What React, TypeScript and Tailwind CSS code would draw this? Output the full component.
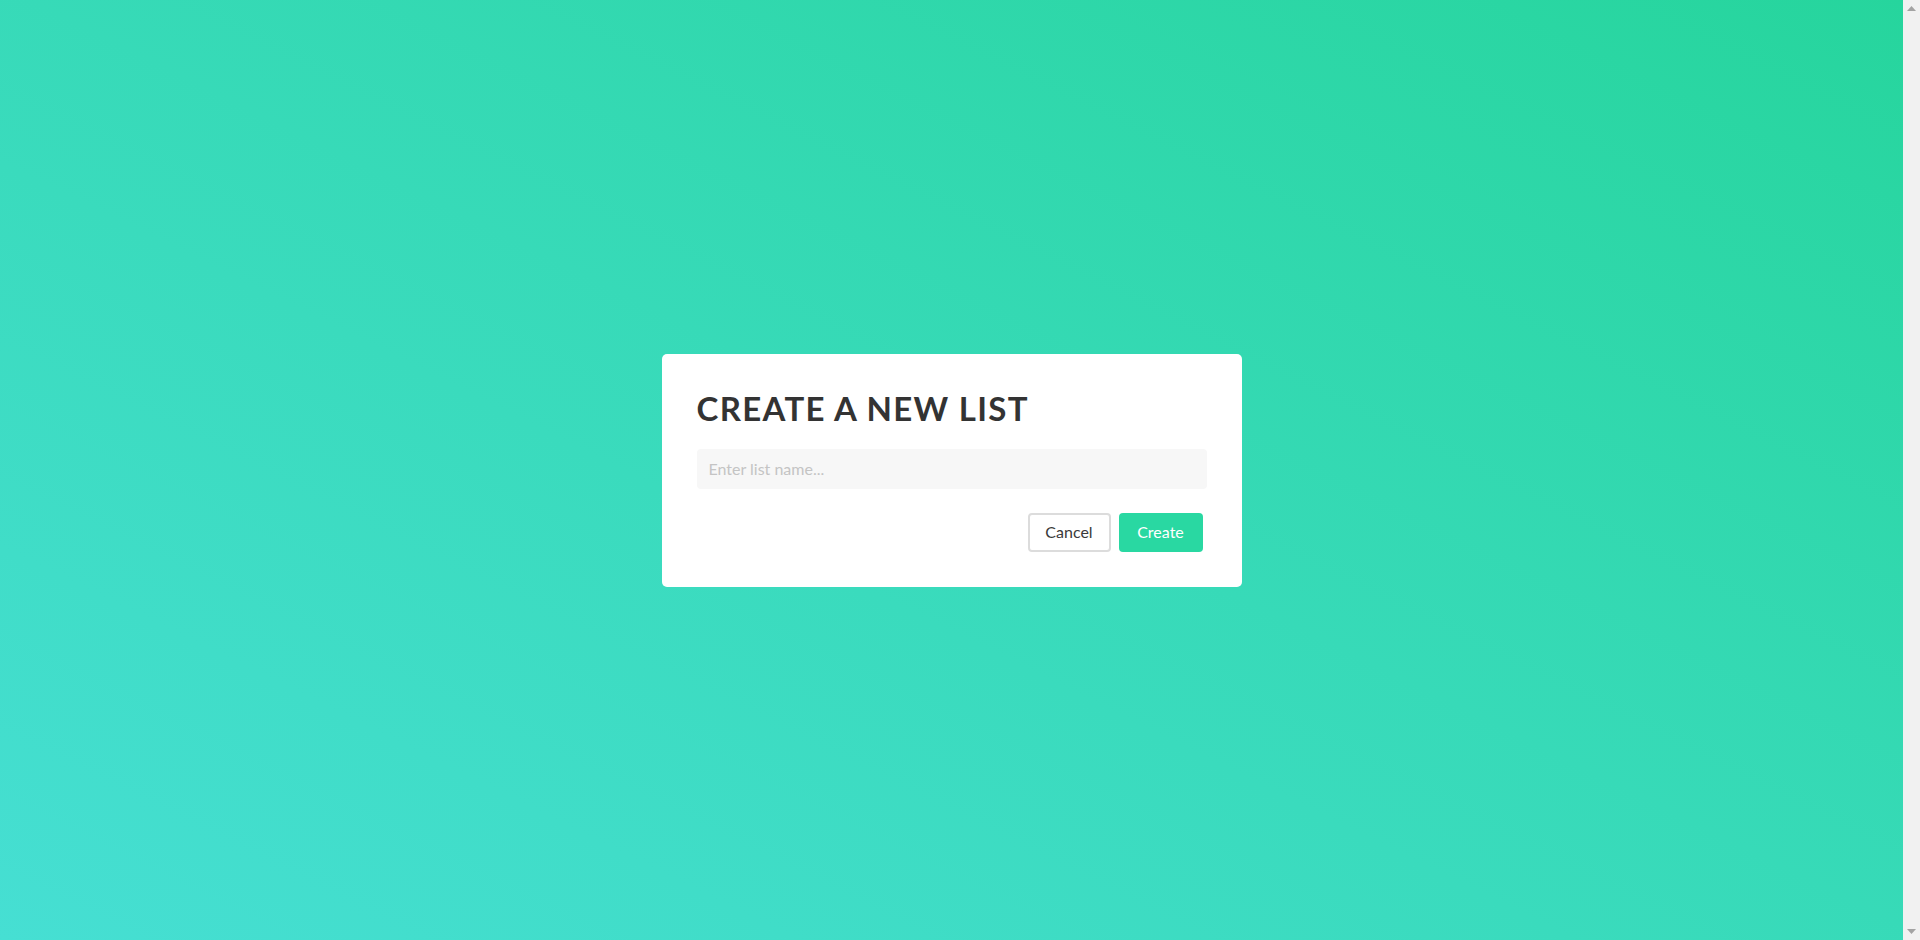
import { useState } from 'react';

function ScrollbarArrow({ down = false }: { down?: boolean }) {
  return (
    <div className="flex h-[17px] w-[17px] items-center justify-center">
      <svg width="9" height="5" viewBox="0 0 9 5" className={down ? 'rotate-180' : ''}>
        <polygon points="4.5,0 9,5 0,5" fill="#a3a3a3" />
      </svg>
    </div>
  );
}

export default function App() {
  const [name, setName] = useState('');

  return (
    <div className="flex h-screen w-full overflow-hidden">
      <div className="flex h-[940px] flex-1 items-center justify-center bg-linear-to-tr from-[#46dfd3] to-[#26d59d]">
        <div className="w-[580px] rounded-[5px] bg-white px-[35px] pt-[34px] pb-[35px]">
          <h1 className="font-['Lato',sans-serif] text-[33px] leading-[40px] font-bold tracking-[0.04em] text-[#333]">
            CREATE A NEW LIST
          </h1>
          <input
            value={name}
            onChange={(e) => setName(e.target.value)}
            placeholder="Enter list name..."
            className="mt-[21px] block h-[40px] w-full rounded-[4px] bg-[#f7f7f7] px-[12px] font-['Lato',sans-serif] text-[16px] text-[#333] outline-none placeholder:text-[#c4c4c4]"
          />
          <div className="mt-[24px] flex justify-end gap-[8px] pr-[4px]">
            <button
              type="button"
              className="h-[39px] w-[83px] rounded-[4px] border-2 border-[#dcdcdc] bg-white font-['Lato',sans-serif] text-[16px] text-[#3a3a3a]"
            >
              Cancel
            </button>
            <button
              type="button"
              className="h-[39px] w-[84px] rounded-[4px] bg-[#29d8a2] font-['Lato',sans-serif] text-[16px] text-white"
            >
              Create
            </button>
          </div>
        </div>
      </div>
      <div className="flex w-[17px] flex-col justify-between bg-[#f1f1f1]">
        <ScrollbarArrow />
        <ScrollbarArrow down />
      </div>
    </div>
  );
}
